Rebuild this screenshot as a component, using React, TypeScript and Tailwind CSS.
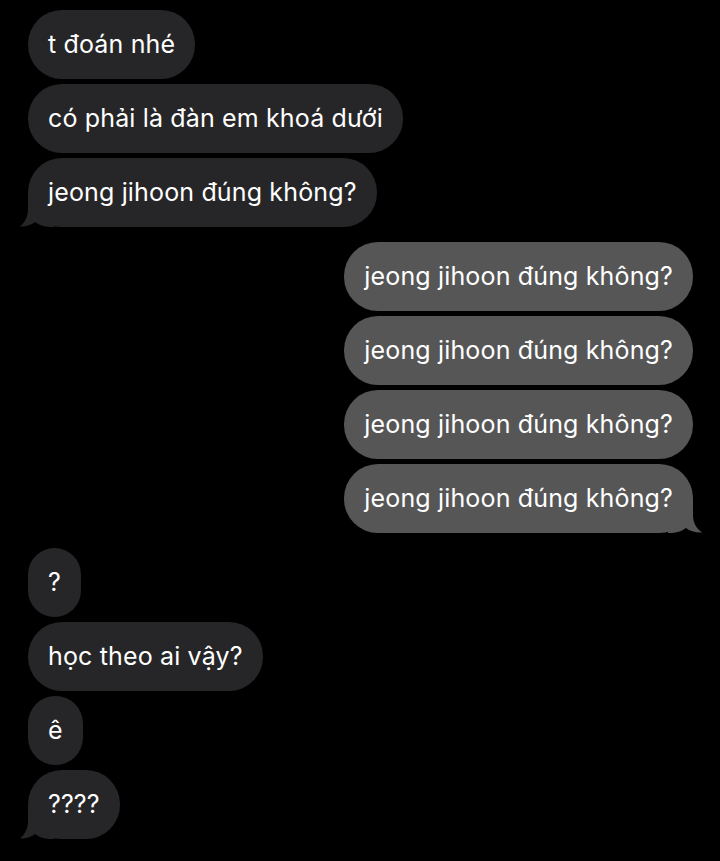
import React from "react";

const font = { fontFamily: '"Inter", "Noto Sans", "Liberation Sans", sans-serif' };

function LeftTail() {
  return (
    <svg
      className="absolute left-[-8px] bottom-0"
      width="34"
      height="36"
      viewBox="0 0 34 36"
    >
      <path
        d="M8 2 L8 18 C8 26 5 31 0 35.5 C6 35.8 11 34 15 31 C19 34 24 36 34 36 L34 2 Z"
        fill="#262628"
      />
    </svg>
  );
}

function RightTail() {
  return (
    <svg
      className="absolute right-[-9px] bottom-0"
      width="34"
      height="36"
      viewBox="0 0 34 36"
    >
      <path
        d="M25 2 L25 18 C25 26 28 31 34 35.5 C27 35.8 22 34 18 31 C14 34 9 36 0 36 L0 2 Z"
        fill="#565656"
      />
    </svg>
  );
}

function Left({ text, tail }: { text: string; tail?: boolean }) {
  return (
    <div className="flex justify-start">
      <div className="relative">
        {tail && <LeftTail />}
        <div className="relative h-[69px] min-w-[52px] flex items-center justify-center rounded-[34px] bg-[#262628] px-[20px] text-[25px] tracking-[0.15px] text-white whitespace-nowrap">
          {text}
        </div>
      </div>
    </div>
  );
}

function Right({ text, tail }: { text: string; tail?: boolean }) {
  return (
    <div className="flex justify-end">
      <div className="relative">
        {tail && <RightTail />}
        <div className="relative h-[69px] flex items-center rounded-[34px] bg-[#565656] px-[20px] text-[25px] tracking-[0.15px] text-white whitespace-nowrap">
          {text}
        </div>
      </div>
    </div>
  );
}

export default function App() {
  return (
    <div className="w-[720px] h-[861px] bg-black overflow-hidden pl-[28px] pr-[27px] pt-[10px]" style={font}>
      <div className="flex flex-col gap-[5px]">
        <Left text="t đoán nhé" />
        <Left text="có phải là đàn em khoá dưới" />
        <Left text="jeong jihoon đúng không?" tail />
      </div>
      <div className="flex flex-col gap-[5px] mt-[15px]">
        <Right text="jeong jihoon đúng không?" />
        <Right text="jeong jihoon đúng không?" />
        <Right text="jeong jihoon đúng không?" />
        <Right text="jeong jihoon đúng không?" tail />
      </div>
      <div className="flex flex-col gap-[5px] mt-[15px]">
        <Left text="?" />
        <Left text="học theo ai vậy?" />
        <Left text="ê" />
        <Left text="????" tail />
      </div>
    </div>
  );
}
